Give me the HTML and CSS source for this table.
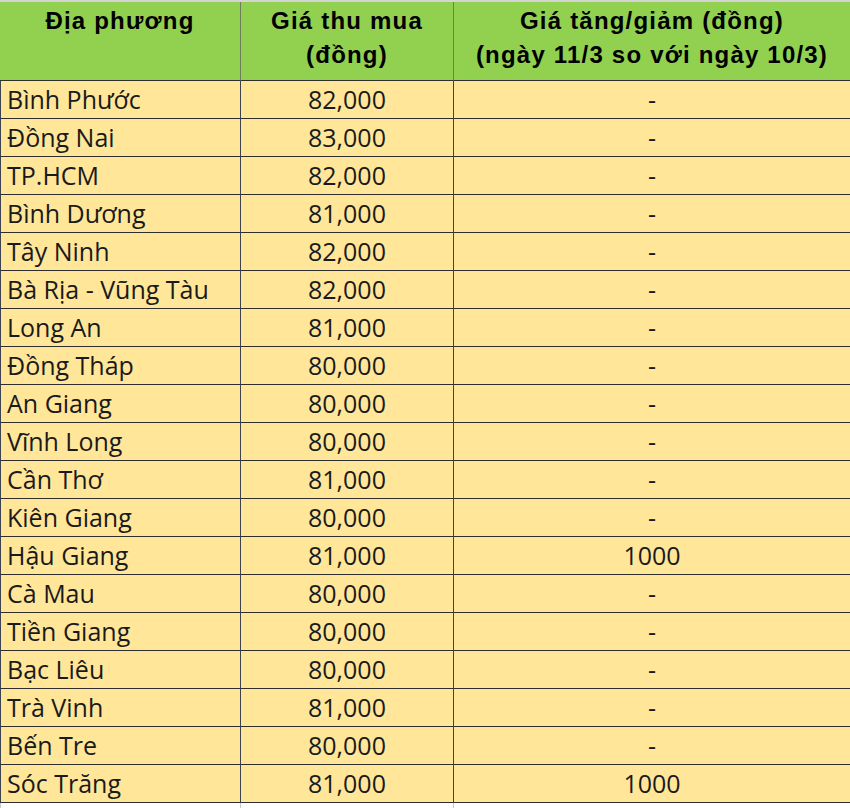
FILE: index.html
```html
<!DOCTYPE html>
<html lang="vi">
<head>
<meta charset="utf-8">
<title>Giá thu mua</title>
<link rel="stylesheet" href="styles.css">
</head>
<body>
<div class="table">
  <div class="row head">
    <div class="cell c1">Địa phương</div>
    <div class="cell c2">Giá thu mua<br>(đồng)</div>
    <div class="cell c3">Giá tăng/giảm (đồng)<br>(ngày 11/3 so với ngày 10/3)</div>
  </div>
  <div class="row"><div class="cell c1">Bình Phước</div><div class="cell c2">82,000</div><div class="cell c3">-</div></div>
  <div class="row"><div class="cell c1">Đồng Nai</div><div class="cell c2">83,000</div><div class="cell c3">-</div></div>
  <div class="row"><div class="cell c1">TP.HCM</div><div class="cell c2">82,000</div><div class="cell c3">-</div></div>
  <div class="row"><div class="cell c1">Bình Dương</div><div class="cell c2">81,000</div><div class="cell c3">-</div></div>
  <div class="row"><div class="cell c1">Tây Ninh</div><div class="cell c2">82,000</div><div class="cell c3">-</div></div>
  <div class="row"><div class="cell c1">Bà Rịa - Vũng Tàu</div><div class="cell c2">82,000</div><div class="cell c3">-</div></div>
  <div class="row"><div class="cell c1">Long An</div><div class="cell c2">81,000</div><div class="cell c3">-</div></div>
  <div class="row"><div class="cell c1">Đồng Tháp</div><div class="cell c2">80,000</div><div class="cell c3">-</div></div>
  <div class="row"><div class="cell c1">An Giang</div><div class="cell c2">80,000</div><div class="cell c3">-</div></div>
  <div class="row"><div class="cell c1">Vĩnh Long</div><div class="cell c2">80,000</div><div class="cell c3">-</div></div>
  <div class="row"><div class="cell c1">Cần Thơ</div><div class="cell c2">81,000</div><div class="cell c3">-</div></div>
  <div class="row"><div class="cell c1">Kiên Giang</div><div class="cell c2">80,000</div><div class="cell c3">-</div></div>
  <div class="row"><div class="cell c1">Hậu Giang</div><div class="cell c2">81,000</div><div class="cell c3">1000</div></div>
  <div class="row"><div class="cell c1">Cà Mau</div><div class="cell c2">80,000</div><div class="cell c3">-</div></div>
  <div class="row"><div class="cell c1">Tiền Giang</div><div class="cell c2">80,000</div><div class="cell c3">-</div></div>
  <div class="row"><div class="cell c1">Bạc Liêu</div><div class="cell c2">80,000</div><div class="cell c3">-</div></div>
  <div class="row"><div class="cell c1">Trà Vinh</div><div class="cell c2">81,000</div><div class="cell c3">-</div></div>
  <div class="row"><div class="cell c1">Bến Tre</div><div class="cell c2">80,000</div><div class="cell c3">-</div></div>
  <div class="row"><div class="cell c1">Sóc Trăng</div><div class="cell c2">81,000</div><div class="cell c3">1000</div></div>
  <div class="row blank"><div class="cell c1"></div><div class="cell c2"></div><div class="cell c3"></div></div>
</div>
</body>
</html>
```
FILE: styles.css
```css
html, body {
  margin: 0;
  padding: 0;
  background: #ffffff;
}
.table {
  width: 850px;
  overflow: hidden;
  height: 808px;
}
.row {
  display: grid;
  grid-template-columns: 241px 213px 1fr;
  background: #ffe699;
  color: #1a1a1a;
  font-family: "Open Sans", "Noto Sans", sans-serif;
  font-size: 25px;
  line-height: 37px;
}
.cell {
  height: 37px;
  border-bottom: 1px solid #2e2e2e;
  border-right: 1px solid #3c4452;
  white-space: nowrap;
}
.c1 {
  padding-left: 6px;
  border-left: 1px solid #3c4452;
}
.c2, .c3 {
  text-align: center;
}
.c3 {
  border-right: none;
}
.head {
  background: #92d050;
  color: #000000;
  font-family: "Liberation Sans", Arial, sans-serif;
  font-weight: bold;
  font-size: 24px;
  letter-spacing: 1.2px;
  line-height: 34px;
  border-top: 2px solid #d4d4d4;
}
.head .cell {
  height: 76px;
  padding-top: 2px;
  border-right-color: #6e7f5e;
  border-left: none;
}
.head .c1 {
  padding-left: 0;
  text-align: center;
}
.head .c3 {
  border-right: none;
}
.blank {
  background: #ffffff;
}
.blank .cell {
  border-bottom: none;
  border-right-color: #c8c8c8;
  border-left-color: #c8c8c8;
}
```
